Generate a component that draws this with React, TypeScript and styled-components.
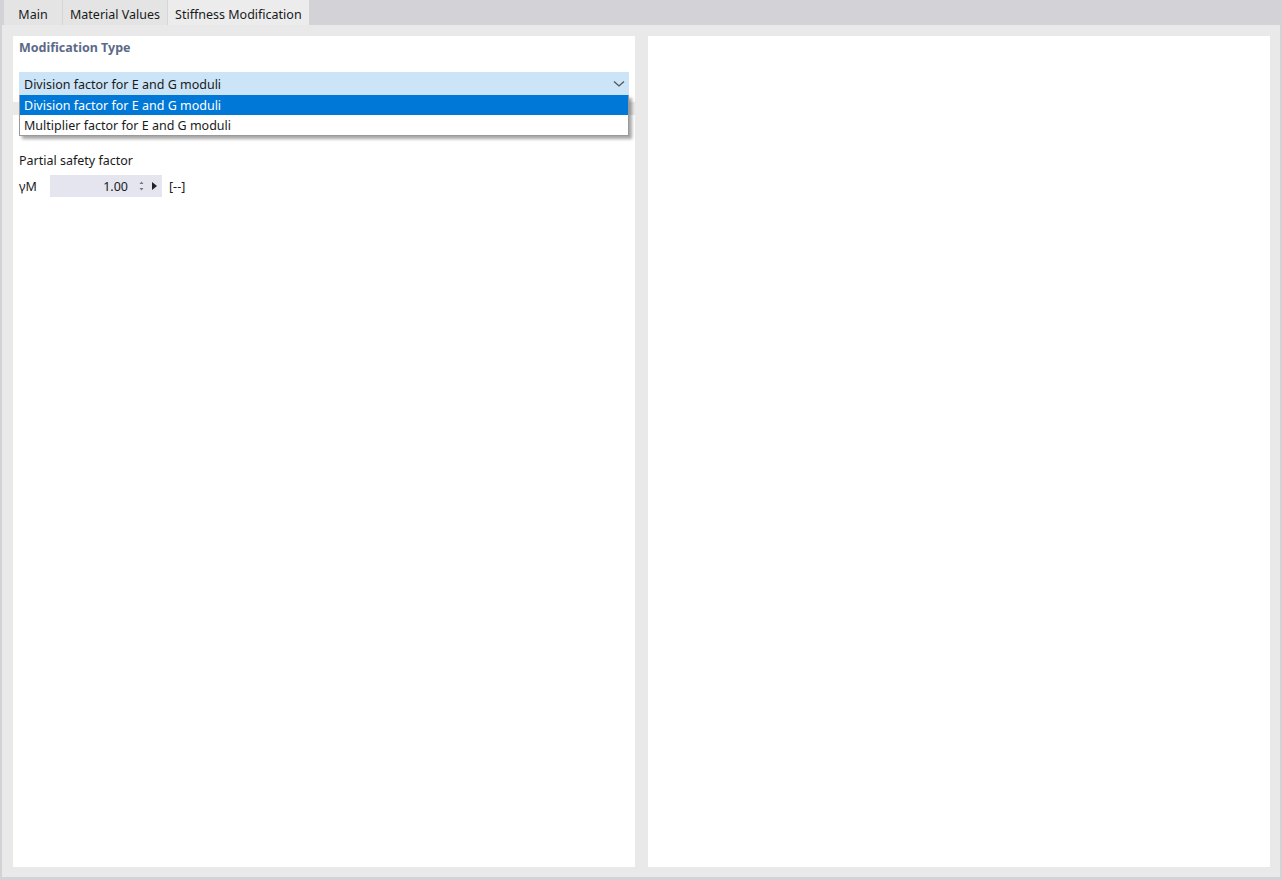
import React from "react";
import styled, { createGlobalStyle } from "styled-components";

const Global = createGlobalStyle`
  html, body { margin: 0; padding: 0; }
  body {
    font-family: "Noto Sans", "Open Sans", "Liberation Sans", sans-serif;
    font-size: 12.5px;
    color: #1a1a1a;
    background: #e9e9e9;
  }
`;

const Window = styled.div`
  width: 1282px;
  height: 880px;
  box-sizing: border-box;
  display: flex;
  flex-direction: column;
  background: #e9e9e9;
  border-left: 2px solid #d3d2d7;
  border-right: 2px solid #d3d2d7;
  border-bottom: 3px solid #d3d2d7;
`;

const TabBar = styled.div`
  height: 25px;
  flex: none;
  display: flex;
  background: #d3d2d7;
  margin: 0 -2px;
  padding-left: 4px;
`;

const Tab = styled.div<{ $active?: boolean; $min?: number }>`
  display: flex;
  align-items: center;
  justify-content: center;
  padding: 3px 7px 0;
  min-width: ${(p) => p.$min ?? 0}px;
  box-sizing: border-box;
  background: ${(p) => (p.$active ? "#ececec" : "#e4e4e4")};
  border-right: ${(p) => (p.$active ? "none" : "1px solid #d6d6d6")};
  color: #1a1a1a;
  white-space: nowrap;
`;

const Body = styled.div`
  flex: 1;
  display: flex;
  gap: 13px;
  padding: 11px 10px 10px 11px;
  min-height: 0;
`;

const Panel = styled.div`
  flex: 1;
  background: #ffffff;
  position: relative;
  padding: 4px 6px;
  display: flex;
  flex-direction: column;
`;

const Title = styled.div`
  font-weight: 700;
  color: #5b6a88;
  line-height: 16px;
  height: 16px;
`;

const ComboWrap = styled.div`
  position: relative;
  margin-top: 16px;
  z-index: 2;
`;

const Combo = styled.div`
  height: 23px;
  background: #cce4f7;
  display: flex;
  align-items: center;
  justify-content: space-between;
  padding: 1px 4px 0 5px;
  box-sizing: border-box;
`;

const Popup = styled.div`
  position: absolute;
  left: 0;
  right: 0;
  top: 100%;
  background: #fff;
  border: 1px solid #9a9a9a;
  border-top: none;
  box-shadow: 3px 3px 3px rgba(0, 0, 0, 0.35);
`;

const Item = styled.div<{ $selected?: boolean }>`
  height: 20px;
  display: flex;
  align-items: center;
  padding-left: 4px;
  background: ${(p) => (p.$selected ? "#0078d7" : "#fff")};
  color: ${(p) => (p.$selected ? "#fff" : "#1a1a1a")};
`;

const UnderBand = styled.div`
  position: absolute;
  left: 0;
  right: 0;
  top: 66px;
  height: 13px;
  background: #e9e9e9;
  z-index: 1;
`;

const Label = styled.div`
  margin-top: 58px;
  line-height: 16px;
`;

const FieldRow = styled.div`
  margin-top: 6px;
  display: flex;
  align-items: center;
  height: 22px;
`;

const Symbol = styled.div`
  width: 31px;
`;

const NumberBox = styled.div`
  width: 112px;
  height: 22px;
  background: #e5e5ef;
  display: flex;
  align-items: center;
  justify-content: flex-end;
  padding-right: 4px;
  box-sizing: border-box;
  gap: 6px;
`;

const Value = styled.span`
  margin-right: 4px;
`;

const Unit = styled.div`
  margin-left: 7px;
`;

function Chevron() {
  return (
    <svg width="12" height="8" viewBox="0 0 12 8">
      <polyline points="1,1.5 6,6 11,1.5" fill="none" stroke="#555" strokeWidth="1.3" />
    </svg>
  );
}

function Spinner() {
  return (
    <svg width="7" height="16" viewBox="0 0 7 16">
      <polygon points="3.5,3.5 5.5,6 1.5,6" fill="#777" />
      <polygon points="3.5,12.5 5.5,10 1.5,10" fill="#777" />
    </svg>
  );
}

function Arrow() {
  return (
    <svg width="7" height="10" viewBox="0 0 7 10">
      <polygon points="1,1 6,5 1,9" fill="#222" />
    </svg>
  );
}

export default function App() {
  return (
    <>
      <Global />
      <Window>
        <TabBar>
          <Tab $min={59}>Main</Tab>
          <Tab>Material Values</Tab>
          <Tab $active>Stiffness Modification</Tab>
        </TabBar>
        <Body>
          <Panel>
            <Title>Modification Type</Title>
            <ComboWrap>
              <Combo>
                <span>Division factor for E and G moduli</span>
                <Chevron />
              </Combo>
              <Popup>
                <Item $selected>Division factor for E and G moduli</Item>
                <Item>Multiplier factor for E and G moduli</Item>
              </Popup>
            </ComboWrap>
            <UnderBand />
            <Label>Partial safety factor</Label>
            <FieldRow>
              <Symbol>γM</Symbol>
              <NumberBox>
                <Value>1.00</Value>
                <Spinner />
                <Arrow />
              </NumberBox>
              <Unit>[--]</Unit>
            </FieldRow>
          </Panel>
          <Panel />
        </Body>
      </Window>
    </>
  );
}
